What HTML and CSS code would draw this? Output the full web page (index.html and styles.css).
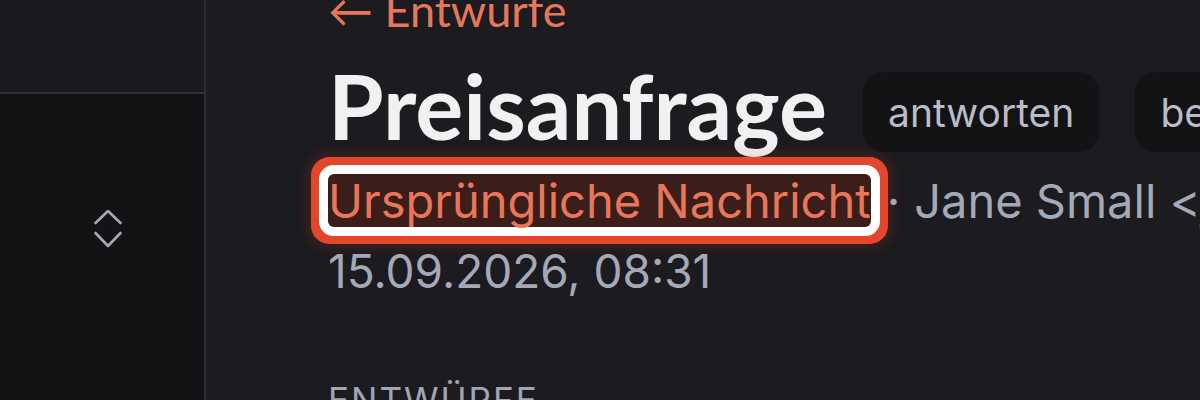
FILE: index.html
```html
<!DOCTYPE html>
<html lang="de">
<head>
<meta charset="utf-8">
<title>Preisanfrage</title>
<link rel="stylesheet" href="styles.css">
</head>
<body>
<aside class="sidebar">
  <div class="sidebar-top"></div>
  <div class="sidebar-body">
    <svg class="chevrons" width="30" height="40" viewBox="0 0 30 40" aria-hidden="true">
      <polyline points="2.5,13 15,1 27.5,13" />
      <polyline points="2.5,23 15,36 27.5,23" />
    </svg>
  </div>
</aside>
<main class="main">
  <div class="content">
    <a class="back" href="#">← Entwürfe</a>
    <div class="title-row">
      <h1 class="title">Preisanfrage</h1>
      <button class="pill">antworten</button>
      <button class="pill">bearbeiten</button>
    </div>
    <div class="meta">
      <span class="highlight">Ursprüngliche Nachricht</span><span class="sep">·</span><span class="from">Jane Small &lt;jane.small@example.com&gt;</span>
    </div>
    <div class="date">15.09.2026, 08:31</div>
    <h2 class="section">Entwürfe</h2>
  </div>
</main>
</body>
</html>
```
FILE: styles.css
```css
html, body {
  margin: 0;
  height: 100%;
}
body {
  display: flex;
  height: 400px;
  overflow: hidden;
  background: #1c1b20;
  font-family: Inter, "Noto Sans", sans-serif;
}
.sidebar {
  width: 204px;
  flex: none;
  display: flex;
  flex-direction: column;
  border-right: 2px solid #2c2b31;
  background: #131215;
}
.sidebar-top {
  height: 92px;
  background: #1b1a1f;
  border-bottom: 2px solid #33323a;
}
.sidebar-body {
  display: flex;
  justify-content: center;
  padding: 116px 0 0 12px;
}
.chevrons {
  display: block;
  fill: none;
  stroke: #a9a9ad;
  stroke-width: 2.6;
  stroke-linecap: round;
  stroke-linejoin: round;
}
.main {
  flex: 1;
  min-width: 0;
  overflow: hidden;
  padding-left: 122px;
}
.content {
  margin-top: -14px;
  white-space: nowrap;
}
.back {
  display: block;
  font-family: Lato, sans-serif;
  font-size: 45px;
  line-height: 48px;
  color: #e8775a;
  text-decoration: none;
}
.title-row {
  display: flex;
  align-items: flex-start;
  gap: 36px;
  margin-top: 21px;
}
.title {
  margin: 0;
  font-family: Lato, sans-serif;
  font-weight: 700;
  font-size: 90px;
  line-height: 100px;
  color: #f1f1f1;
}
.pill {
  flex: none;
  height: 80px;
  margin-top: 17px;
  padding: 0 25px;
  border: none;
  border-radius: 20px;
  background: #131215;
  color: #b9bdc8;
  font-family: Inter, sans-serif;
  font-size: 39px;
}
.meta {
  display: flex;
  align-items: center;
  margin-top: 19px;
  font-size: 47px;
  line-height: 53px;
  color: #a3a9b6;
}
.highlight {
  color: #e8775a;
  background: #3b1d1a;
  border-radius: 6px;
  box-shadow: 0 0 0 9px #ffffff, 0 0 0 17px #e2462b, 0 0 14px 19px rgba(226, 70, 43, 0.22);
}
.sep {
  margin: 0 14px 0 16px;
}
.date {
  margin-top: 18px;
  font-size: 46px;
  line-height: 53px;
  color: #a3a9b6;
}
.section {
  margin: 81px 0 0;
  font-size: 35px;
  line-height: 42px;
  font-weight: 400;
  letter-spacing: 2px;
  text-transform: uppercase;
  color: #a0a6b2;
}
```
